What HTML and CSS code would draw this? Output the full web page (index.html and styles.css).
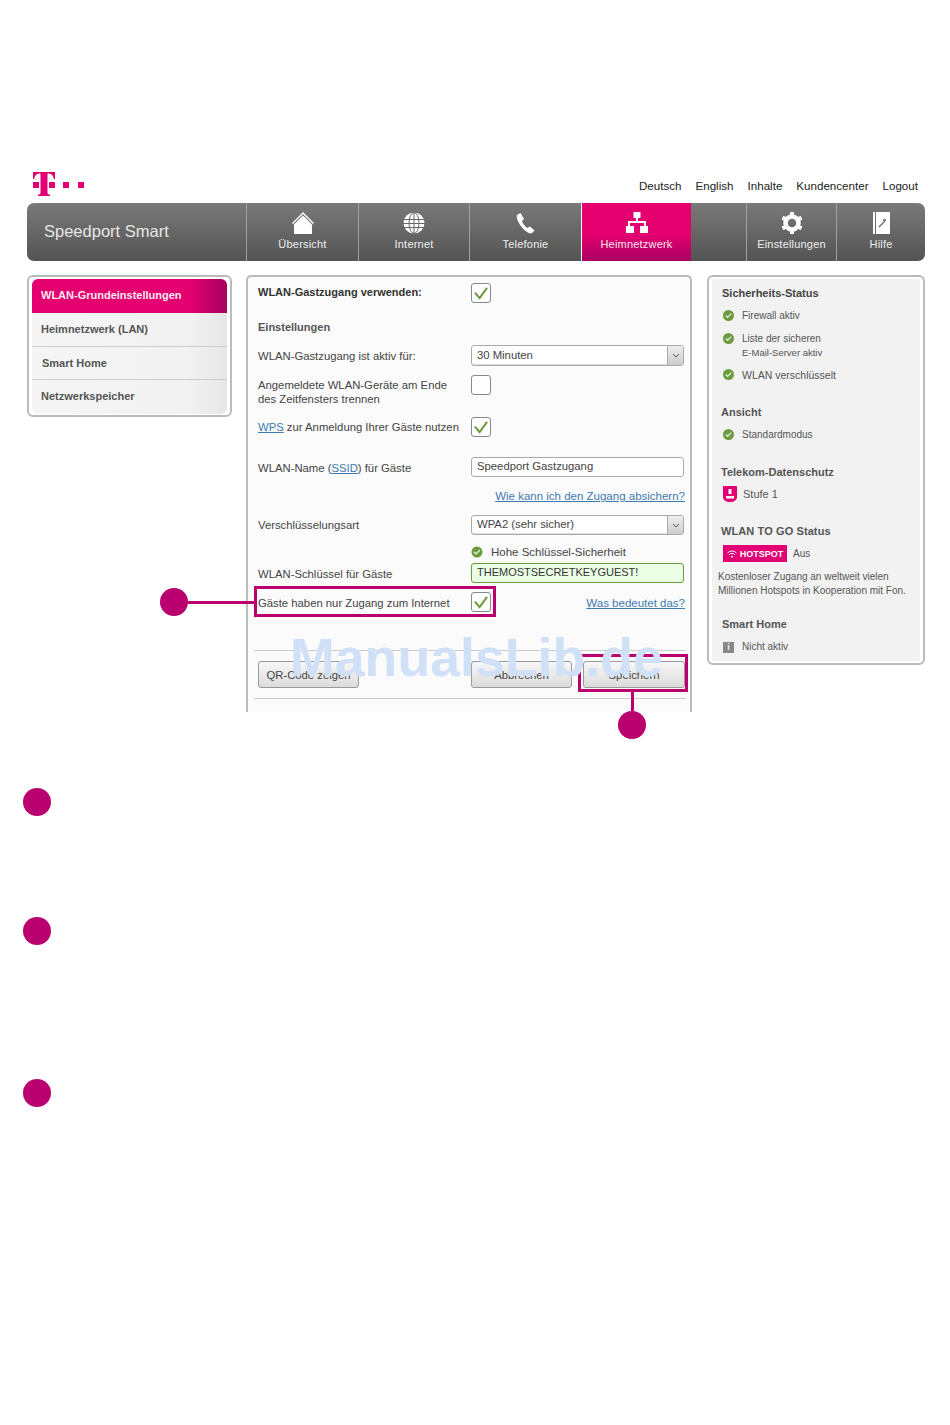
FILE: index.html
```html
<!DOCTYPE html>
<html lang="de">
<head>
<meta charset="utf-8">
<title>Speedport Smart</title>
<link rel="stylesheet" href="styles.css">
</head>
<body>
<div class="page">
  <header class="top">
    <svg class="logo" width="52" height="24" viewBox="0 0 52 24">
      <path fill="#e20074" d="M0 10h6v6H0zM16 10h6v6h-6zM30 10h6v6h-6zM45 10h6v6h-6z"/>
      <path fill="#e20074" d="M0 0h22v7h-1.300C20.400 3.500 18.600 1.600 14.500 1.500V20.500c0 1.500 .6 2 2.500 2V24H5v-1.500c1.900 0 2.500-.5 2.500-2V1.500C3.400 1.600 1.600 3.500 1.300 7H0z"/>
    </svg>
    <nav class="links">
      <a>Deutsch</a><a>English</a><a>Inhalte</a><a>Kundencenter</a><a>Logout</a>
    </nav>
  </header>

  <nav class="bar">
    <div class="brand">Speedport Smart</div>
    <a class="tab w112">
      <svg width="22" height="22" viewBox="0 0 22 22"><path fill="#fff" d="M11 0 22 11l-1 1L11 2 1 12l-1-1z"/><path fill="#fff" d="M11 3.500 20 12.500V22H2v-9.500z"/></svg>
      <span>Übersicht</span>
    </a>
    <a class="tab w111">
      <svg width="22" height="22" viewBox="0 0 22 22"><circle cx="11" cy="11" r="10.500" fill="#fff"/><g fill="none" stroke="#666" stroke-width="1"><ellipse cx="11" cy="11" rx="5" ry="10.500"/><path d="M11 0v22M1 7.500h20M0 11.500h22M1 15.500h20"/></g></svg>
      <span>Internet</span>
    </a>
    <a class="tab w112">
      <svg width="20" height="22" viewBox="0 0 20 22"><path fill="#fff" d="M1 3 4.500 1 8 7 6 9c1 3 3 5.500 5.500 7l2.500-1.500 4.500 4L16 21c-1.500.8-3 .3-4.500-.7C6.500 17 2.500 11.500 1 6.500.7 5 .5 4 1 3z"/></svg>
      <span>Telefonie</span>
    </a>
    <a class="tab w110 on">
      <svg width="22" height="22" viewBox="0 0 22 22"><path fill="#fff" d="M7.500 0h7v6h-2.500v3H20v5h2v7h-8v-7h4v-3H4v3h4v7H0v-7h2V9h8V6H7.500z"/></svg>
      <span>Heimnetzwerk</span>
    </a>
    <div class="gapcell"></div>
    <a class="tab w90">
      <svg width="22" height="22" viewBox="0 0 22 22"><circle cx="11" cy="11" r="6.500" fill="none" stroke="#fff" stroke-width="4.500"/><path fill="none" stroke="#fff" stroke-width="4" d="M11 0v4M11 18v4M1.500 5.500l3.500 2M17 14.500l3.500 2M1.500 16.500l3.500-2M17 7.500l3.500-2"/></svg>
      <span>Einstellungen</span>
    </a>
    <a class="tab w89">
      <svg width="17" height="22" viewBox="0 0 17 22"><path fill="#fff" d="M0 0h2v22H0zM3 0h14v22H3z"/><path fill="none" stroke="#666" stroke-width="1.300" d="M6 15l6-6M10 8l3 0"/></svg>
      <span>Hilfe</span>
    </a>
  </nav>

  <main class="main">
    <aside class="menu">
      <a class="menu-item active">WLAN-Grundeinstellungen</a>
      <a class="menu-item">Heimnetzwerk (LAN)</a>
      <a class="menu-item smart">Smart Home</a>
      <a class="menu-item last">Netzwerkspeicher</a>
    </aside>

    <section class="form">
      <div class="row">
        <label class="lbl strong">WLAN-Gastzugang verwenden:</label>
        <span class="check on"><svg width="16" height="14" viewBox="0 0 17 15"><path fill="none" stroke="#6c9a3c" stroke-width="2.200" d="M2 7l5 6 8-11"/></svg></span>
      </div>
      <h3 class="section">Einstellungen</h3>
      <div class="row r-time">
        <label class="lbl">WLAN-Gastzugang ist aktiv für:</label>
        <span class="field select tall">30 Minuten<i class="arrow"><svg width="8" height="5" viewBox="0 0 8 5"><path fill="none" stroke="#555" d="M1 1l3 3 3-3"/></svg></i></span>
      </div>
      <div class="row top-al r-end">
        <label class="lbl two">Angemeldete WLAN-Geräte am Ende<br>des Zeitfensters trennen</label>
        <span class="check"></span>
      </div>
      <div class="row r-wps">
        <label class="lbl"><a class="lnk">WPS</a> zur Anmeldung Ihrer Gäste nutzen</label>
        <span class="check on"><svg width="16" height="14" viewBox="0 0 17 15"><path fill="none" stroke="#6c9a3c" stroke-width="2.200" d="M2 7l5 6 8-11"/></svg></span>
      </div>
      <div class="row r-ssid">
        <label class="lbl low">WLAN-Name (<a class="lnk">SSID</a>) für Gäste</label>
        <span class="field">Speedport Gastzugang</span>
      </div>
      <div class="hint r-hint"><a class="lnk">Wie kann ich den Zugang absichern?</a></div>
      <div class="row r-enc">
        <label class="lbl">Verschlüsselungsart</label>
        <span class="field select">WPA2 (sehr sicher)<i class="arrow"><svg width="8" height="5" viewBox="0 0 8 5"><path fill="none" stroke="#555" d="M1 1l3 3 3-3"/></svg></i></span>
      </div>
      <div class="strength">
        <svg width="12" height="12" viewBox="0 0 12 12"><circle cx="6" cy="6" r="5.500" fill="#6c9a3c"/><path fill="none" stroke="#dfe" stroke-width="1.200" d="M3 6l2 2 4-4"/></svg>
        <span>Hohe Schlüssel-Sicherheit</span>
      </div>
      <div class="row r-key">
        <label class="lbl low">WLAN-Schlüssel für Gäste</label>
        <span class="field good">THEMOSTSECRETKEYGUEST!</span>
      </div>
      <div class="row r-guest">
        <label class="lbl low">Gäste haben nur Zugang zum Internet</label>
        <span class="check on"><svg width="16" height="14" viewBox="0 0 17 15"><path fill="none" stroke="#6c9a3c" stroke-width="2.200" d="M2 7l5 6 8-11"/></svg></span>
        <a class="lnk push">Was bedeutet das?</a>
      </div>
      <hr class="rule r-rule1">
      <div class="buttons">
        <button class="btn">QR-Code zeigen</button>
        <div class="btn-right">
          <button class="btn">Abbrechen</button>
          <button class="btn save">Speichern</button>
        </div>
      </div>
      <hr class="rule r-rule2">
    </section>

    <aside class="status">
      <div class="status-in">
        <h4 class="st-head first">Sicherheits-Status</h4>
        <div class="st-item m9"><svg class="ok" width="11" height="11" viewBox="0 0 12 12"><circle cx="6" cy="6" r="6" fill="#6c9a3c"/><path fill="none" stroke="#dfe" stroke-width="1.300" d="M3 6l2 2 4-4"/></svg><span>Firewall aktiv</span></div>
        <div class="st-item m9"><svg class="ok" width="11" height="11" viewBox="0 0 12 12"><circle cx="6" cy="6" r="6" fill="#6c9a3c"/><path fill="none" stroke="#dfe" stroke-width="1.300" d="M3 6l2 2 4-4"/></svg><span>Liste der sicheren<br><small class="sub">E-Mail-Server aktiv</small></span></div>
        <div class="st-item m8 big"><svg class="ok" width="11" height="11" viewBox="0 0 12 12"><circle cx="6" cy="6" r="6" fill="#6c9a3c"/><path fill="none" stroke="#dfe" stroke-width="1.300" d="M3 6l2 2 4-4"/></svg><span>WLAN verschlüsselt</span></div>
        <h4 class="st-head">Ansicht</h4>
        <div class="st-item m9"><svg class="ok" width="11" height="11" viewBox="0 0 12 12"><circle cx="6" cy="6" r="6" fill="#6c9a3c"/><path fill="none" stroke="#dfe" stroke-width="1.300" d="M3 6l2 2 4-4"/></svg><span>Standardmodus</span></div>
        <h4 class="st-head">Telekom-Datenschutz</h4>
        <div class="st-item m8 shield-row"><svg class="shield" width="14" height="16" viewBox="0 0 14 16"><path fill="#e20074" d="M1 0h12c.6 0 1 .4 1 1v10c0 3-3 5-7 5s-7-2-7-5V1c0-.6.4-1 1-1z"/><path fill="#fff" d="M5.500 3h3v5h-3zM3 10h8v2.500H3z"/></svg><span>Stufe 1</span></div>
        <h4 class="st-head wide">WLAN TO GO Status</h4>
        <div class="hotspot-row">
          <span class="hotspot"><svg width="10" height="8" viewBox="0 0 10 8"><path fill="none" stroke="#fff" d="M.5 3a6 6 0 0 1 9 0M2 4.800a4 4 0 0 1 6 0"/><circle cx="5" cy="6.800" r="1" fill="#fff"/></svg>HOTSPOT</span>
          <span class="aus">Aus</span>
        </div>
        <p class="note">Kostenloser Zugang an weltweit vielen<br>Millionen Hotspots in Kooperation mit Fon.</p>
        <h4 class="st-head sh">Smart Home</h4>
        <div class="st-item m9 info-row"><i class="info">i</i><span>Nicht aktiv</span></div>
      </div>
    </aside>
  </main>

  <div class="callout c1"><i class="dot"></i><i class="hline"></i></div>
  <div class="frame f1"></div>
  <div class="frame f2"></div>
  <div class="callout c2"><i class="vline"></i><i class="dot"></i></div>
  <div class="watermark">ManualsLib.de</div>

  <div class="steps">
    <i class="dot s1"></i>
    <i class="dot s2"></i>
    <i class="dot s3"></i>
  </div>
</div>
</body>
</html>
```

FILE: styles.css
```css
* { box-sizing: border-box; }
html, body { margin: 0; padding: 0; background: #fff; }
body { font-family: "Liberation Sans", Arial, sans-serif; font-size: 11.300px; color: #444; }
a { color: inherit; text-decoration: none; }

.page { position: relative; width: 950px; height: 1425px; padding: 170px 25px 0 27px; }

.top { display: flex; justify-content: space-between; height: 33px; padding: 2px 7px 0 6px; }
.logo { display: block; }
.links { display: flex; gap: 14px; padding-top: 7px; font-size: 11.600px; line-height: 14px; color: #222; }

.bar { display: flex; height: 58px; border-radius: 7px; overflow: hidden; background: linear-gradient(#797979, #545454); color: #eee; }
.brand { width: 219px; padding: 18px 0 0 17px; font-size: 16.500px; line-height: 20px; color: #e6e6e6; }
.tab { display: flex; flex-direction: column; align-items: center; padding-top: 9px; border-left: 1px solid #a0a0a0; font-size: 11px; line-height: 14px; }
.tab svg { display: block; height: 22px; }
.tab span { margin-top: 3px; letter-spacing: .2px; }
.w112 { width: 112px; }
.w111 { width: 111px; }
.w110 { width: 110px; }
.w90 { width: 90px; }
.w89 { width: 89px; }
.tab.on { background: linear-gradient(#e4006f, #e4006f 55%, #a80060); border-left-color: #fff; color: #f6e6ee; }
.gapcell { width: 55px; }

.main { display: flex; align-items: flex-start; margin-top: 14px; }

.menu { width: 205px; height: 142px; padding: 2px 3px; border: 2px solid #bbb; border-radius: 6px; background: #fff; font-size: 11px; font-weight: bold; color: #555; }
.menu-item { display: block; height: 33.500px; padding: 9px 0 0 9px; line-height: 14px; border-bottom: 1px solid #ccc; background: linear-gradient(90deg, #f5f5f5, #f2f2f2 80%, #e6e6e6); }
.menu-item.active { height: 34px; padding-top: 9px; border-bottom: 0; border-radius: 6px 6px 0 0; color: #fbeaf2; background: linear-gradient(90deg, #e4006f, #e4006f 80%, #a80060); }
.menu-item.smart { padding-left: 10px; }
.menu-item.last { border-bottom: 0; border-radius: 0 0 6px 6px; }

.form { width: 446px; height: 437px; margin: 0 15px 0 14px; padding: 6px 5px 0 10px; border: 2px solid #bbb; border-bottom: 0; border-radius: 5px 5px 0 0; background: #fbfbfb; }
.row { display: flex; align-items: center; }
.row.top-al { align-items: flex-start; }
.lbl { display: block; width: 213px; line-height: 14px; color: #444; white-space: nowrap; }
.lbl.strong { padding-bottom: 2px; font-size: 11px; font-weight: bold; color: #333; }
.lbl.two { padding-top: 3px; }
.lbl.low { padding-top: 2px; }
.lnk { color: #3d7ab0; text-decoration: underline; }
.check { display: flex; align-items: center; justify-content: center; width: 20px; height: 20px; border: 1px solid #888; border-radius: 3px; background: #fff; }
.field { position: relative; display: block; width: 213px; height: 20px; padding-left: 5px; border: 1px solid #aaa; border-radius: 3px; background: #fff; line-height: 17px; color: #444; }
.field.tall { height: 21px; line-height: 18px; }
.select { box-shadow: inset 0 -1px 0 #ddd; }
.arrow { position: absolute; right: 0; top: 0; bottom: 0; display: flex; align-items: center; justify-content: center; width: 16px; border-left: 1px solid #aaa; border-radius: 0 2px 2px 0; background: linear-gradient(#eee, #ccc); }
.good { border-color: #6c9a3c; background: #eaffe6; color: #333; font-size: 11px; }
.section { margin: 17px 0 0; font-size: 11px; font-weight: bold; line-height: 14px; color: #555; }
.r-time { margin-top: 11px; }
.r-end { margin-top: 9px; height: 31px; }
.r-wps { margin-top: 11px; }
.r-ssid { margin-top: 20px; }
.hint { margin-top: 12px; font-size: 11.500px; line-height: 14px; text-align: right; }
.r-enc { margin-top: 12px; }
.strength { display: flex; align-items: center; gap: 8px; height: 14px; margin: 10px 0 0 213px; line-height: 14px; font-size: 11.500px; }
.r-key { margin-top: 4px; }
.r-guest { margin-top: 9px; }
.push { margin-left: auto; padding-top: 2px; font-size: 11.500px; }
.rule { height: 1px; margin: 0 -1px 0 -4px; border: 0; background: #ccc; }
.r-rule1 { margin-top: 38px; }
.r-rule2 { margin-top: 10px; }
.buttons { display: flex; justify-content: space-between; margin-top: 10px; }
.btn-right { display: flex; gap: 11px; }
.btn { width: 101px; height: 27px; padding: 0; border: 1px solid #999; border-radius: 3px; background: linear-gradient(#f7f7f7, #dcdcdc); font: 11.300px/14px "Liberation Sans", Arial, sans-serif; color: #444; }
.btn.save { width: 102px; }

.status { width: 218px; height: 390px; padding: 2px 3px; border: 2px solid #bbb; border-radius: 6px; background: #fff; }
.status-in { height: 100%; padding: 7px 0 0 10px; background: #f2f2f2; font-size: 10px; line-height: 14px; color: #555; }
.st-head { margin: 23px 0 0 -1px; font-size: 11px; font-weight: bold; line-height: 14px; color: #555; }
.st-head.first { margin: 0; color: #444; }
.st-head.wide { letter-spacing: .1px; }
.st-head.sh { margin: 19px 0 0; }
.st-item { position: relative; padding-left: 20px; }
.m8 { margin-top: 8px; }
.m9 { margin-top: 9px; }
.big { font-size: 10.500px; }
.sub { font-size: 9.500px; }
.ok { position: absolute; left: 1px; top: 1px; }
.shield-row { padding-left: 21px; font-size: 11px; }
.shield { position: absolute; left: 1px; top: -1px; }
.info-row { padding-left: 20px; }
.info { position: absolute; left: 1px; top: 2px; width: 11px; height: 11px; background: #888; color: #eee; font: bold 9px/11px "Liberation Sans", Arial, sans-serif; text-align: center; }
.hotspot-row { display: flex; align-items: center; gap: 6px; height: 17px; margin: 7px 0 0 1px; }
.hotspot { display: flex; align-items: center; justify-content: center; gap: 3px; width: 64px; height: 17px; background: #e20074; color: #fff; font-size: 9px; font-weight: bold; }
.note { margin: 8px 0 0 -4px; white-space: nowrap; }

.callout, .frame, .dot, .hline, .vline { display: block; }
.dot { width: 28px; height: 28px; border-radius: 50%; background: #b9006e; }
.callout { position: absolute; display: flex; }
.c1 { left: 160px; top: 588px; width: 95px; align-items: center; }
.hline { flex: 1; height: 3px; background: #b9006e; }
.c2 { left: 618px; top: 690px; width: 28px; flex-direction: column; align-items: center; }
.vline { width: 3px; height: 21px; background: #b9006e; }
.frame { position: absolute; border: 3px solid #b9006e; }
.f1 { left: 254px; top: 586px; width: 242px; height: 31px; }
.f2 { left: 578px; top: 654px; width: 110px; height: 38px; }
.watermark { position: absolute; left: 290px; top: 626px; font-size: 53.700px; font-weight: bold; line-height: 62px; color: #cfe0f7; white-space: nowrap; }

.steps { margin-left: -4px; }
.s1 { margin-top: 76px; }
.s2 { margin-top: 101px; }
.s3 { margin-top: 134px; }
```
